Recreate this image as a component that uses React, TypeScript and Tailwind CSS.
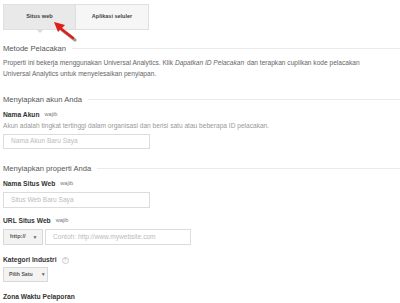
import React from "react"

function SectionHeader({ title }: { title: string }) {
  return (
    <div className="flex items-center h-[11px] gap-[6px]">
      <span className="text-[7.6px] text-[#555] whitespace-nowrap leading-none">{title}</span>
      <div className="flex-1 h-px bg-[#ebebeb]" />
    </div>
  )
}

function Label({ text, wajib, help }: { text: string; wajib?: boolean; help?: boolean }) {
  return (
    <div className="flex items-center h-[10px] gap-[5px]">
      <span className="text-[6.7px] font-bold text-[#333] leading-none">{text}</span>
      {wajib && <span className="text-[5.6px] text-[#777] leading-none">wajib</span>}
      {help && (
        <span className="w-[7px] h-[7px] rounded-full border border-[#ccc] text-[5px] text-[#bbb] flex items-center justify-center leading-none">
          ?
        </span>
      )}
    </div>
  )
}

function TextInput({ placeholder, w, h }: { placeholder: string; w: string; h: string }) {
  return (
    <div className={`${w} ${h} border border-[#dcdcdc] bg-white flex items-center pl-[7px]`}>
      <span className="text-[6.6px] text-[#bbb] leading-none">{placeholder}</span>
    </div>
  )
}

export default function App() {
  return (
    <div className="relative w-[400px] h-[303px] bg-white overflow-hidden pl-[3px] font-['Liberation_Sans',Arial,sans-serif]">
      <div className="pt-[4px] flex">
        <div className="flex w-[146px] h-[26px] border border-[#e0e0e0]">
          <div className="relative w-[73px] bg-[#e9e9e9] border-r border-[#dedede] flex items-center justify-center">
            <span className="text-[5.7px] font-bold text-[#444] leading-none">Situs web</span>
            <div className="absolute left-1/2 -translate-x-1/2 top-full w-0 h-0 border-l-[4px] border-r-[4px] border-t-[4px] border-l-transparent border-r-transparent border-t-[#dcdcdc]" />
          </div>
          <div className="w-[73px] bg-[#f6f6f6] flex items-center justify-center">
            <span className="text-[5.5px] font-bold text-[#444] leading-none">Aplikasi seluler</span>
          </div>
        </div>
      </div>

      <div className="mt-[13px]">
        <SectionHeader title="Metode Pelacakan" />
      </div>
      <p className="mt-[3px] text-[6.6px] leading-[11px] text-[#666] pr-[30px]">
        Properti ini bekerja menggunakan Universal Analytics. Klik <i className="pr-[1px]">Dapatkan ID Pelacakan</i> dan terapkan cuplikan kode pelacakan Universal Analytics untuk menyelesaikan penyiapan.
      </p>

      <div className="mt-[15px]">
        <SectionHeader title="Menyiapkan akun Anda" />
      </div>
      <div className="mt-[5px]">
        <Label text="Nama Akun" wajib />
      </div>
      <div className="mt-[1px] h-[10px] flex items-center">
        <span className="text-[6.6px] text-[#999] leading-none">
          Akun adalah tingkat tertinggi dalam organisasi dan berisi satu atau beberapa ID pelacakan.
        </span>
      </div>
      <div className="mt-[3px]">
        <TextInput placeholder="Nama Akun Baru Saya" w="w-[147px]" h="h-[15px]" />
      </div>

      <div className="mt-[14px]">
        <SectionHeader title="Menyiapkan properti Anda" />
      </div>
      <div className="mt-[5px]">
        <Label text="Nama Situs Web" wajib />
      </div>
      <div className="mt-[3px]">
        <TextInput placeholder="Situs Web Baru Saya" w="w-[147px]" h="h-[16px]" />
      </div>

      <div className="mt-[8px]">
        <Label text="URL Situs Web" wajib />
      </div>
      <div className="mt-[3px] flex gap-[2px]">
        <div className="w-[40px] h-[16px] border border-[#d8d8d8] bg-[#f3f3f3] flex items-center pl-[6px] gap-[7px]">
          <span className="text-[5.6px] font-bold text-[#555] leading-none">http://</span>
          <span className="text-[5px] text-[#666] leading-none">▼</span>
        </div>
        <TextInput placeholder="Contoh: http://www.mywebsite.com" w="w-[146px]" h="h-[16px]" />
      </div>

      <div className="mt-[10px]">
        <Label text="Kategori Industri" help />
      </div>
      <div className="mt-[2px]">
        <div className="w-[45px] h-[15px] border border-[#d8d8d8] bg-[#f3f3f3] flex items-center pl-[5px] gap-[8px]">
          <span className="text-[5.2px] font-bold text-[#555] leading-none">Pilih Satu</span>
          <span className="text-[5px] text-[#666] leading-none">▼</span>
        </div>
      </div>

      <div className="mt-[10px]">
        <Label text="Zona Waktu Pelaporan" />
      </div>

      <svg className="absolute left-0 top-0" width="400" height="303" viewBox="0 0 400 303">
        <line x1="75" y1="40" x2="62" y2="30" stroke="#333" strokeOpacity="0.5" strokeWidth="3.2" strokeLinecap="round" />
        <line x1="73" y1="38" x2="60" y2="28" stroke="#e21b1b" strokeWidth="2.4" strokeLinecap="round" />
        <polygon points="54,22 65,25 58,32" fill="#e21b1b" />
      </svg>
    </div>
  )
}
